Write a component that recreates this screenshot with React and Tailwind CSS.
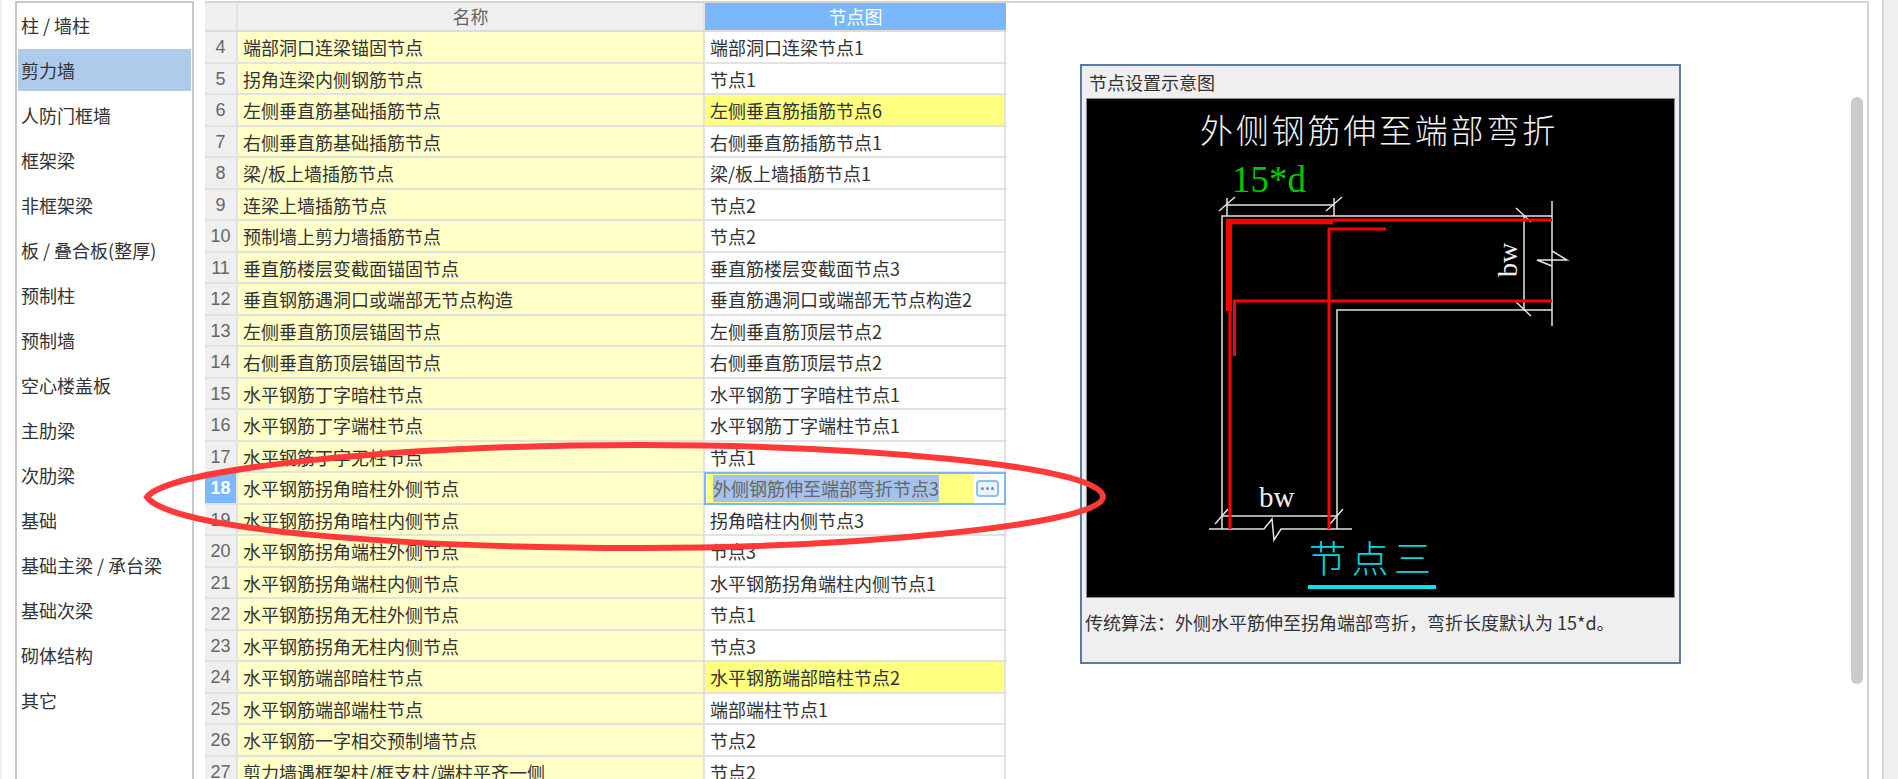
import React from 'react';

const CJK = "font-['Noto_Sans_CJK_SC','Liberation_Sans',sans-serif]";

const navItems = [
  '柱 / 墙柱', '剪力墙', '人防门框墙', '框架梁', '非框架梁', '板 / 叠合板(整厚)', '预制柱', '预制墙',
  '空心楼盖板', '主肋梁', '次肋梁', '基础', '基础主梁 / 承台梁', '基础次梁', '砌体结构', '其它',
];

const rows = [
  [4, '端部洞口连梁锚固节点', '端部洞口连梁节点1'],
  [5, '拐角连梁内侧钢筋节点', '节点1'],
  [6, '左侧垂直筋基础插筋节点', '左侧垂直筋插筋节点6', true],
  [7, '右侧垂直筋基础插筋节点', '右侧垂直筋插筋节点1'],
  [8, '梁/板上墙插筋节点', '梁/板上墙插筋节点1'],
  [9, '连梁上墙插筋节点', '节点2'],
  [10, '预制墙上剪力墙插筋节点', '节点2'],
  [11, '垂直筋楼层变截面锚固节点', '垂直筋楼层变截面节点3'],
  [12, '垂直钢筋遇洞口或端部无节点构造', '垂直筋遇洞口或端部无节点构造2'],
  [13, '左侧垂直筋顶层锚固节点', '左侧垂直筋顶层节点2'],
  [14, '右侧垂直筋顶层锚固节点', '右侧垂直筋顶层节点2'],
  [15, '水平钢筋丁字暗柱节点', '水平钢筋丁字暗柱节点1'],
  [16, '水平钢筋丁字端柱节点', '水平钢筋丁字端柱节点1'],
  [17, '水平钢筋丁字无柱节点', '节点1'],
  [18, '水平钢筋拐角暗柱外侧节点', '外侧钢筋伸至端部弯折节点3'],
  [19, '水平钢筋拐角暗柱内侧节点', '拐角暗柱内侧节点3'],
  [20, '水平钢筋拐角端柱外侧节点', '节点3'],
  [21, '水平钢筋拐角端柱内侧节点', '水平钢筋拐角端柱内侧节点1'],
  [22, '水平钢筋拐角无柱外侧节点', '节点1'],
  [23, '水平钢筋拐角无柱内侧节点', '节点3'],
  [24, '水平钢筋端部暗柱节点', '水平钢筋端部暗柱节点2', true],
  [25, '水平钢筋端部端柱节点', '端部端柱节点1'],
  [26, '水平钢筋一字相交预制墙节点', '节点2'],
  [27, '剪力墙遇框架柱/框支柱/端柱平齐一侧', '节点2'],
];

const EditCell = ({ text }) => (
  <div className="relative z-10 -ml-[1px] -mt-[1px] flex h-[33px] w-[302px] shrink-0 items-center self-start border-2 border-[#7ab8f5] bg-white pl-[1px] pr-[5px]">
    <div className="flex h-full w-[267px] items-center bg-[#ffff80] pl-[6px]">
      <span className="whitespace-nowrap bg-[#a4c2ea] leading-[27px] text-[#666]">{text}</span>
    </div>
    <div className="ml-[2px] flex h-[17px] w-[23px] items-center justify-center gap-[2px] rounded-[4px] border-2 border-[#8fbfee] bg-[#eef3fb]">
      <span className="h-[3px] w-[3px] rounded-full bg-[#5f93d0]" />
      <span className="h-[3px] w-[3px] rounded-full bg-[#5f93d0]" />
      <span className="h-[3px] w-[3px] rounded-full bg-[#5f93d0]" />
    </div>
  </div>
);

const Row = ({ num, name, node, yellow }) => {
  const active = num === 18;
  return (
    <div className="flex h-[31.5px] shrink-0 border-b-2 border-[#e2e2e2] leading-[31px]">
      <div className={`w-[33px] shrink-0 border-r-2 border-[#e2e2e2] text-center font-['Liberation_Sans',sans-serif] text-[18px] ${active ? 'bg-[#7ab8ff] font-bold text-white' : 'bg-[#efefef] text-[#666]'}`}>
        {num}
      </div>
      <div className="w-[467px] shrink-0 overflow-hidden whitespace-nowrap border-r-2 border-[#e2e2e2] bg-[#ffffc8] pl-[5px] text-[#333]">
        {name}
      </div>
      {active ? (
        <EditCell text={node} />
      ) : (
        <div className={`w-[301px] shrink-0 overflow-hidden whitespace-nowrap border-r-2 border-[#e2e2e2] pl-[5px] text-[#333] ${yellow ? 'bg-[#ffff80]' : 'bg-white'}`}>
          {node}
        </div>
      )}
    </div>
  );
};

// node 3 sketch, coordinates are relative to the black picture
const NodeDrawing = () => (
  <svg width="586" height="498" viewBox="1087 99 586 498" className="block">
    <text x="1200" y="143" fill="#f2f2f2" fontSize="33" letterSpacing="2.8" fontFamily="'Noto Sans CJK SC',sans-serif" fontWeight="300">外侧钢筋伸至端部弯折</text>
    <text x="1232" y="192" fill="#00c800" fontSize="37" fontFamily="'Liberation Serif',serif">15*d</text>

    <g stroke="#e4e4e4" strokeWidth="1.5" fill="none">
      <path d="M1222 529V216H1552" />
      <path d="M1337 529V310H1552" />
      <path d="M1227 198V216M1334 198V216M1227 205H1334" />
      <path d="M1219 211L1235 197M1326 211L1342 197" />
      <path d="M1209 529H1264L1272 519L1274 540L1281 529H1352" />
      <path d="M1222 516H1337" />
      <path d="M1215 524L1228 509M1330 524L1343 509" />
      <path d="M1524 216V310" />
      <path d="M1516 208L1531 222M1516 302L1531 316" />
      <path d="M1552 201V326" />
      <path d="M1552 266L1537 260H1567L1552 251" />
    </g>

    <g stroke="#ff0000" fill="none" strokeWidth="3">
      <path d="M1226 221.5H1333" strokeWidth="5.5" />
      <path d="M1333 220H1552" />
      <path d="M1229 219V311" strokeWidth="6" />
      <path d="M1230 311V529" />
      <path d="M1234.5 356V301H1552" />
      <path d="M1329 529V229H1386" />
    </g>

    <text x="1259" y="507" fill="#eeeeee" fontSize="29" fontFamily="'Liberation Serif',serif">bw</text>
    <text transform="translate(1517 277) rotate(-90)" fill="#eeeeee" fontSize="28" fontFamily="'Liberation Serif',serif">bw</text>

    <text x="1309" y="573" fill="#00d8e0" fontSize="37" letterSpacing="5.5" fontFamily="'Noto Sans CJK SC',sans-serif" fontWeight="300">节点三</text>
    <rect x="1308" y="585" width="128" height="4" fill="#00e5ee" />
  </svg>
);

export default function App() {
  return (
    <div className={`relative flex h-[779px] w-[1898px] overflow-hidden bg-white text-[18px] ${CJK}`}>
      <div className="w-[2px] shrink-0 bg-[#efefef]" />
      <aside className="ml-[13px] mt-px flex w-[179px] shrink-0 flex-col gap-[3px] border-2 border-b-0 border-[#c8c8c8] px-[1px] pt-[1px] text-[#333]">
        {navItems.map((item, i) => (
          <div key={item} className={`flex h-[42px] shrink-0 items-center pl-[3px] ${i === 1 ? 'bg-[#aecbeb]' : ''}`}>
            {item}
          </div>
        ))}
      </aside>

      <main className="ml-[11px] mt-px flex w-[1664px] shrink-0 border-2 border-b-0 border-l-0 border-[#d4d4d4]">
        <div className="flex w-[802px] shrink-0 flex-col">
          <div className="flex h-[29px] shrink-0 border-b-2 border-[#dcdcdc] leading-[27px]">
            <div className="w-[33px] border-r-2 border-[#e2e2e2] bg-[#efefef]" />
            <div className="w-[467px] border-r-2 border-[#e2e2e2] bg-[#efefef] text-center text-[#666]">名称</div>
            <div className="w-[301px] bg-[#7ab8fb] text-center text-white">节点图</div>
          </div>
          {rows.map(([num, name, node, yellow]) => (
            <Row key={num} num={num} name={name} node={node} yellow={yellow} />
          ))}
        </div>

        <section className="ml-[73px] mt-[61px] flex h-[600px] w-[601px] shrink-0 flex-col border-2 border-[#5b7aa8] bg-[#efefef] text-[#333]">
          <div className="flex h-[32px] shrink-0 items-center pl-[7px]">节点设置示意图</div>
          <div className="mx-[4px] border border-[#8a8a8a] bg-black">
            <NodeDrawing />
          </div>
          <p className="mt-[11px] whitespace-nowrap pl-[3px] text-[18px]">传统算法：外侧水平筋伸至拐角端部弯折，弯折长度默认为 15*d。</p>
        </section>

        <div className="ml-[170px] mt-[94px] h-[587px] w-[12px] shrink-0 rounded-full bg-[#cbcbcb]" />
      </main>

      <div className="ml-[13px] flex-1 border-l-2 border-[#d8d8d8] bg-[#efefef]" />

      <svg className="pointer-events-none absolute left-0 top-0" width="1898" height="779" fill="none">
        <path d="M147 497C170 468 400 445 640 445C850 445 1103 465 1103 497C1103 525 850 548 640 548C400 548 170 530 147 497Z" stroke="#ff3838" strokeWidth="6" />
      </svg>
    </div>
  );
}
